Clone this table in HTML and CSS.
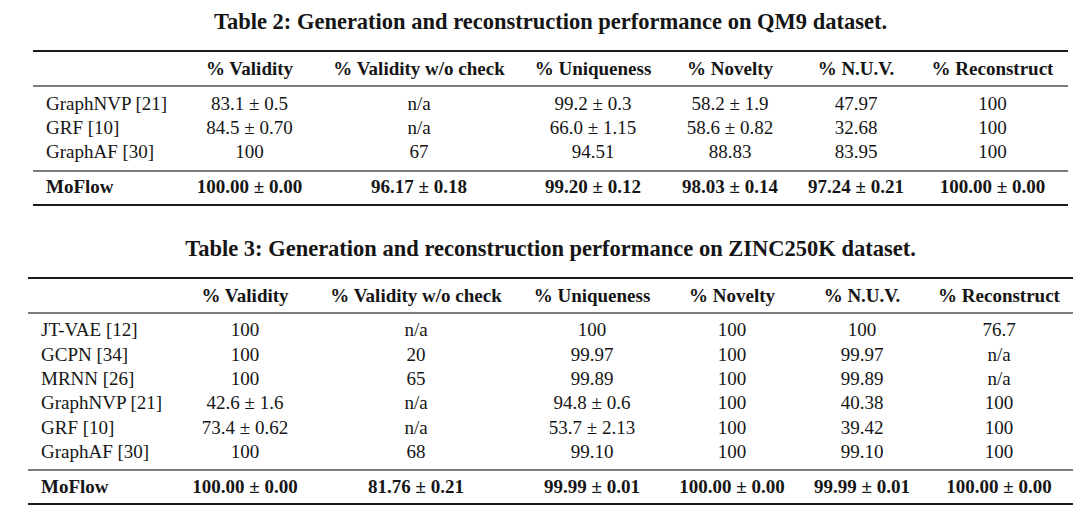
FILE: index.html
```html
<!DOCTYPE html>
<html lang="en">
<head>
<meta charset="utf-8">
<title>MoFlow results</title>
<link rel="stylesheet" href="styles.css">
</head>
<body>
<main class="page">
  <table class="results results-qm9">
    <caption class="caption">Table 2: Generation and reconstruction performance on QM9 dataset.</caption>
    <colgroup>
      <col class="c-l1"><col class="c-a1"><col class="c-b1"><col class="c-c1"><col class="c-d1"><col class="c-e1"><col class="c-f1">
    </colgroup>
    <thead>
      <tr><th class="label"></th><th>% Validity</th><th>% Validity w/o check</th><th>% Uniqueness</th><th>% Novelty</th><th>% N.U.V.</th><th>% Reconstruct</th></tr>
    </thead>
    <tbody>
      <tr class="first"><td class="label">GraphNVP [21]</td><td>83.1 ± 0.5</td><td>n/a</td><td>99.2 ± 0.3</td><td>58.2 ± 1.9</td><td>47.97</td><td>100</td></tr>
      <tr><td class="label">GRF [10]</td><td>84.5 ± 0.70</td><td>n/a</td><td>66.0 ± 1.15</td><td>58.6 ± 0.82</td><td>32.68</td><td>100</td></tr>
      <tr class="last"><td class="label">GraphAF [30]</td><td>100</td><td>67</td><td>94.51</td><td>88.83</td><td>83.95</td><td>100</td></tr>
      <tr class="best"><td class="label">MoFlow</td><td>100.00 ± 0.00</td><td>96.17 ± 0.18</td><td>99.20 ± 0.12</td><td>98.03 ± 0.14</td><td>97.24 ± 0.21</td><td>100.00 ± 0.00</td></tr>
    </tbody>
  </table>

  <table class="results results-zinc">
    <caption class="caption">Table 3: Generation and reconstruction performance on ZINC250K dataset.</caption>
    <colgroup>
      <col class="c-l2"><col class="c-a2"><col class="c-b2"><col class="c-c2"><col class="c-d2"><col class="c-e2"><col class="c-f2">
    </colgroup>
    <thead>
      <tr><th class="label"></th><th>% Validity</th><th>% Validity w/o check</th><th>% Uniqueness</th><th>% Novelty</th><th>% N.U.V.</th><th>% Reconstruct</th></tr>
    </thead>
    <tbody>
      <tr class="first"><td class="label">JT-VAE [12]</td><td>100</td><td>n/a</td><td>100</td><td>100</td><td>100</td><td>76.7</td></tr>
      <tr><td class="label">GCPN [34]</td><td>100</td><td>20</td><td>99.97</td><td>100</td><td>99.97</td><td>n/a</td></tr>
      <tr><td class="label">MRNN [26]</td><td>100</td><td>65</td><td>99.89</td><td>100</td><td>99.89</td><td>n/a</td></tr>
      <tr><td class="label">GraphNVP [21]</td><td>42.6 ± 1.6</td><td>n/a</td><td>94.8 ± 0.6</td><td>100</td><td>40.38</td><td>100</td></tr>
      <tr><td class="label">GRF [10]</td><td>73.4 ± 0.62</td><td>n/a</td><td>53.7 ± 2.13</td><td>100</td><td>39.42</td><td>100</td></tr>
      <tr class="last"><td class="label">GraphAF [30]</td><td>100</td><td>68</td><td>99.10</td><td>100</td><td>99.10</td><td>100</td></tr>
      <tr class="best"><td class="label">MoFlow</td><td>100.00 ± 0.00</td><td>81.76 ± 0.21</td><td>99.99 ± 0.01</td><td>100.00 ± 0.00</td><td>99.99 ± 0.01</td><td>100.00 ± 0.00</td></tr>
    </tbody>
  </table>
</main>
</body>
</html>
```

FILE: styles.css
```css
html, body {
  margin: 0;
  padding: 0;
  background: #ffffff;
}

body {
  font-family: "Liberation Serif", "Times New Roman", serif;
  color: #151515;
  font-size: 19px;
}

.page {
  padding-top: 8px;
  display: flex;
  flex-direction: column;
}

.results {
  border-collapse: collapse;
  table-layout: fixed;
  border-top: 2px solid #1c1c1c;
  border-bottom: 2px solid #1c1c1c;
}

.results-qm9 {
  width: 1035px;
  margin-left: 33px;
}

.results-zinc {
  width: 1045px;
  margin-left: 28px;
  margin-top: 29px;
}

.caption {
  caption-side: top;
  font-weight: bold;
  font-size: 22.5px;
  line-height: 28px;
  padding-bottom: 14px;
  text-align: center;
  white-space: nowrap;
}

.results th,
.results td {
  padding: 0;
  text-align: center;
  white-space: nowrap;
  line-height: 24.3px;
}

.results th {
  font-weight: bold;
  padding-top: 5px;
  padding-bottom: 4px;
  border-bottom: 2px solid #7c7c7c;
}

.results .label {
  text-align: left;
  padding-left: 13px;
}

.results tr.first td {
  padding-top: 4.5px;
}

.results tr.last td {
  padding-bottom: 5px;
}

.results tr.best td {
  font-weight: bold;
  line-height: 24px;
  border-top: 2px solid #7c7c7c;
  padding-top: 3.5px;
  padding-bottom: 4.5px;
}

/* Table 2 column widths */
.c-l1 { width: 149px; }
.c-a1 { width: 135px; }
.c-b1 { width: 204px; }
.c-c1 { width: 144px; }
.c-d1 { width: 130px; }
.c-e1 { width: 122px; }
.c-f1 { width: 151px; }

/* Table 3 column widths */
.c-l2 { width: 149px; }
.c-a2 { width: 136px; }
.c-b2 { width: 206px; }
.c-c2 { width: 146px; }
.c-d2 { width: 134px; }
.c-e2 { width: 126px; }
.c-f2 { width: 148px; }
```
